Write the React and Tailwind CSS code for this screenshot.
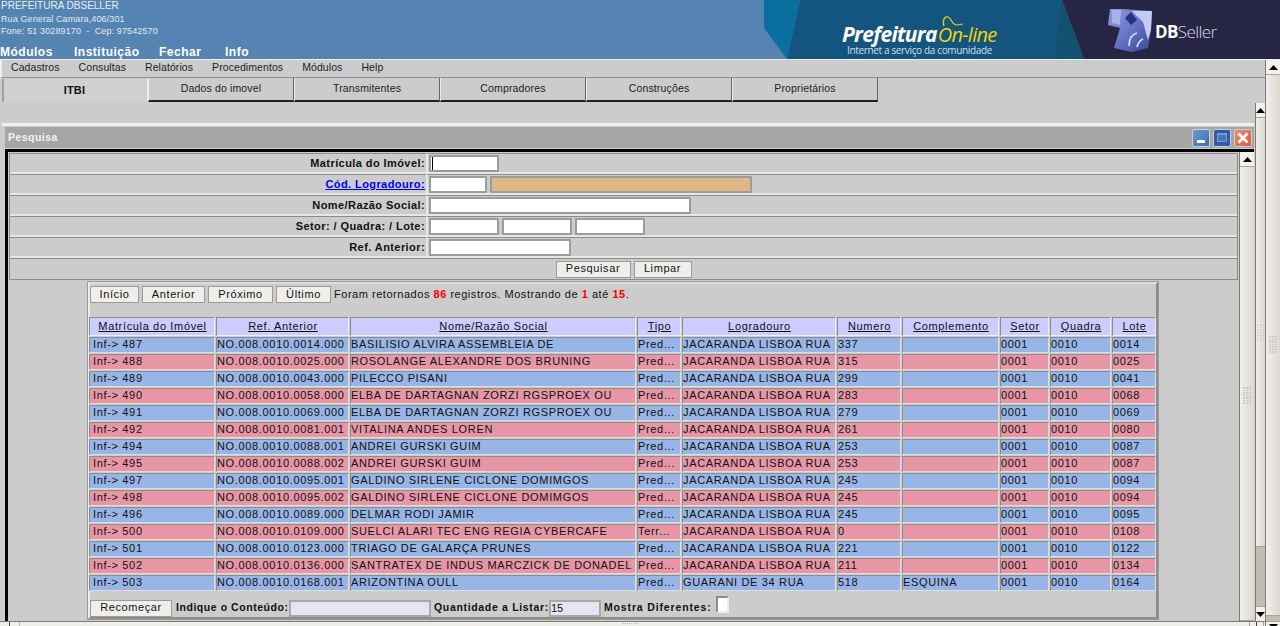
import React from "react";

const tabs = ["Dados do imovel", "Transmitentes", "Compradores", "Construções", "Proprietários"];
const menu = ["Cadastros", "Consultas", "Relatórios", "Procedimentos", "Módulos", "Help"];

const columns = [
  { name: "Matrícula do Imóvel", width: "w-[126px]" },
  { name: "Ref. Anterior", width: "w-[133px]" },
  { name: "Nome/Razão Social", width: "w-[286px]" },
  { name: "Tipo", width: "w-[44px]" },
  { name: "Logradouro", width: "w-[154px]" },
  { name: "Numero", width: "w-[64px]" },
  { name: "Complemento", width: "w-[97px]" },
  { name: "Setor", width: "w-[49px]" },
  { name: "Quadra", width: "w-[61px]" },
  { name: "Lote", width: "w-[44px]" },
];

const JAC = "JACARANDA LISBOA RUA";
const rows = [
  ["Inf-> 487", "NO.008.0010.0014.000", "BASILISIO ALVIRA ASSEMBLEIA DE", "Pred...", JAC, "337", "", "0001", "0010", "0014"],
  ["Inf-> 488", "NO.008.0010.0025.000", "ROSOLANGE ALEXANDRE DOS BRUNING", "Pred...", JAC, "315", "", "0001", "0010", "0025"],
  ["Inf-> 489", "NO.008.0010.0043.000", "PILECCO PISANI", "Pred...", JAC, "299", "", "0001", "0010", "0041"],
  ["Inf-> 490", "NO.008.0010.0058.000", "ELBA DE DARTAGNAN ZORZI RGSPROEX OU", "Pred...", JAC, "283", "", "0001", "0010", "0068"],
  ["Inf-> 491", "NO.008.0010.0069.000", "ELBA DE DARTAGNAN ZORZI RGSPROEX OU", "Pred...", JAC, "279", "", "0001", "0010", "0069"],
  ["Inf-> 492", "NO.008.0010.0081.001", "VITALINA ANDES LOREN", "Pred...", JAC, "261", "", "0001", "0010", "0080"],
  ["Inf-> 494", "NO.008.0010.0088.001", "ANDREI GURSKI GUIM", "Pred...", JAC, "253", "", "0001", "0010", "0087"],
  ["Inf-> 495", "NO.008.0010.0088.002", "ANDREI GURSKI GUIM", "Pred...", JAC, "253", "", "0001", "0010", "0087"],
  ["Inf-> 497", "NO.008.0010.0095.001", "GALDINO SIRLENE CICLONE DOMIMGOS", "Pred...", JAC, "245", "", "0001", "0010", "0094"],
  ["Inf-> 498", "NO.008.0010.0095.002", "GALDINO SIRLENE CICLONE DOMIMGOS", "Pred...", JAC, "245", "", "0001", "0010", "0094"],
  ["Inf-> 496", "NO.008.0010.0089.000", "DELMAR RODI JAMIR", "Pred...", JAC, "245", "", "0001", "0010", "0095"],
  ["Inf-> 500", "NO.008.0010.0109.000", "SUELCI ALARI TEC ENG REGIA CYBERCAFE", "Terr...", JAC, "0", "", "0001", "0010", "0108"],
  ["Inf-> 501", "NO.008.0010.0123.000", "TRIAGO DE GALARÇA PRUNES", "Pred...", JAC, "221", "", "0001", "0010", "0122"],
  ["Inf-> 502", "NO.008.0010.0136.000", "SANTRATEX DE INDUS MARCZICK DE DONADEL", "Pred...", JAC, "211", "", "0001", "0010", "0134"],
  ["Inf-> 503", "NO.008.0010.0168.001", "ARIZONTINA OULL", "Pred...", "GUARANI DE 34 RUA", "518", "ESQUINA", "0001", "0010", "0164"],
];

const Arrow = ({ down }) => (
  <svg width="9" height="5" viewBox="0 0 9 5" className="shrink-0">
    <path d={down ? "M0 0h9L4.5 5z" : "M0 5h9L4.5 0z"} fill="#000" />
  </svg>
);

const Grip = ({ className }) => (
  <div className={`grid grid-cols-3 gap-[1px] w-[8px] ${className}`}>
    {Array.from({ length: 21 }).map((_, i) => (
      <span key={i} className="w-[1.5px] h-[1.5px] bg-[#cfcac3]" />
    ))}
  </div>
);

// vertical scrollbar: arrow button, thumb with grip, then whatever track is left
const ScrollBar = ({ width, gripClass, thumbClass = "flex-1", track, bottom, bottomClass = "h-[15px]" }) => (
  <div className={`${width} shrink-0 flex flex-col border-l border-[#807a70] bg-[#c4bcb1] overflow-hidden`}>
    <div className="h-[15px] shrink-0 flex items-center justify-center bg-[#f3f1ed] border-b border-[#a9a39a]">
      <Arrow />
    </div>
    <div className={`${thumbClass} shrink-0 flex flex-col items-center bg-gradient-to-r from-[#f1efeb] to-[#dcd8d1] border-b border-[#a9a39a]`}>
      <Grip className={gripClass} />
    </div>
    {track && <div className="flex-1" />}
    {bottom && (
      <div className={`${bottomClass} shrink-0 flex items-center justify-center bg-[#f3f1ed] border-t border-[#a9a39a]`}>
        <Arrow down />
      </div>
    )}
  </div>
);

const Button = ({ children, className = "" }) => (
  <button className={`h-[17px] shrink-0 flex items-center justify-center pb-[1px] bg-[#f0eee9] border border-[#9a9a9a] text-[11px] tracking-[0.6px] text-[#111] ${className}`}>
    {children}
  </button>
);

const Field = ({ width, bg = "bg-white", caret }) => (
  <div className={`${width} h-[17px] shrink-0 ${bg} border-2 border-[#9c9c9c] rounded-[1px] flex items-center`}>
    {caret && <span className="ml-[1px] w-[1px] h-[13px] bg-black" />}
  </div>
);

const FormRow = ({ label, link, children }) => (
  <div className="h-[21px] flex border-b-2 border-b-[#e6e6e6]">
    <div className="w-[416px] flex items-center justify-end pr-[1px] border-t border-[#8c8c8c] font-bold text-[11px] tracking-[0.42px] text-[#111]">
      {link ? <a href="#" className="text-[#0000ee] underline">{label}</a> : label}
    </div>
    <div className="flex-1 flex items-center gap-[3px] pl-[1px] border-l-2 border-l-[#e6e6e6] border-t border-t-[#8c8c8c]">
      {children}
    </div>
  </div>
);

const WinButton = ({ className, children }) => (
  <div className={`w-[18px] h-[18px] rounded-[2px] border border-[#c8d0dc] flex items-center justify-center ${className}`}>
    {children}
  </div>
);

const Banner = () => (
  <div className="relative w-[516px] h-[59px] shrink-0">
    <svg width="516" height="59" viewBox="0 0 516 59" className="absolute inset-0">
      <polygon points="0,0 36,0 23,59 0,28" fill="#0a6e9e" />
      <polygon points="36,0 298,0 320,59 23,59" fill="#13557f" />
      <polygon points="298,0 516,0 516,59 320,59" fill="#262644" />
      <polygon points="298,0 320,59 290,59" fill="#14506f" />
      {/* wave over the word On-line */}
      <path d="M180 26c-2-6 1-10 4-9 4 2 4 8 9 8l6-1" fill="none" stroke="#f0d20a" strokeWidth="1.2" />
      {/* DBSeller cube */}
      <defs>
        <linearGradient id="cube" x1="0" y1="0" x2="1" y2="1">
          <stop offset="0" stopColor="#8f9be0" />
          <stop offset="0.45" stopColor="#6a79cc" />
          <stop offset="1" stopColor="#3a4596" />
        </linearGradient>
      </defs>
      <path d="M346 9l12 0 30 2-1 19-3 18-16 4-18-4 6-20-12-3z" fill="url(#cube)" />
      <path d="M368 11l20 0-1 19-3 10-5-18z" fill="#c4ccf2" />
      <path d="M348 10l9 0-1 15-8-2z" fill="#a9b3ea" />
      <path d="M361 18l6-6 6 8-6 5z" fill="#2b2f80" />
      <path d="M365 46c0-8 4-12 8-13M373 47c1-4 3-7 6-8" stroke="#dfe4fa" strokeWidth="1.6" fill="none" />
    </svg>
    <div className="absolute left-[78px] top-[24px] flex items-baseline leading-[20px]">
      <span className="font-['Open_Sans',sans-serif] font-bold italic text-[21px] tracking-[-0.7px] text-white">Prefeitura</span>
      <span className="font-['Open_Sans',sans-serif] italic text-[20px] tracking-[-0.7px] ml-[1px] text-[#f0d20a]">On-line</span>
    </div>
    <div className="absolute left-[83px] top-[45px] font-['Open_Sans',sans-serif] text-[10px] leading-[11px] tracking-[-0.35px] text-[#d5dfe6]">
      Internet a serviço da comunidade
    </div>
    <div className="absolute left-[391px] top-[21px] font-['Open_Sans',sans-serif] font-light text-[17px] leading-[22px] tracking-[-0.6px] text-[#d8d8e4]">
      <span className="font-bold text-white">DB</span>Seller
    </div>
  </div>
);

export default function App() {
  return (
    <div className="w-[1280px] h-[626px] overflow-hidden flex flex-col bg-[#cccccc] font-['Liberation_Sans',Arial,sans-serif]">
      {/* Top banner */}
      <header className="h-[59px] shrink-0 flex justify-between bg-[#5584b3]">
        <div className="text-white">
          <div className="pl-[1px]">
            <div className="text-[10px] leading-[11px] text-[#e8eef5]">PREFEITURA DBSELLER</div>
            <div className="mt-[1px] text-[9px] leading-[14px] tracking-[0.12px] text-[#e2e9f2]">Rua General Camara,406/301</div>
            <div className="text-[9px] leading-[11px] tracking-[0.12px] text-[#e2e9f2]">Fone: 51 30289170 &nbsp;-&nbsp; Cep: 97542570</div>
          </div>
          <nav className="mt-[8px] flex font-bold text-[12px] leading-[14px] tracking-[0.5px]">
            <span className="w-[74px]">Módulos</span>
            <span className="w-[85px]">Instituição</span>
            <span className="w-[66px]">Fechar</span>
            <span>Info</span>
          </nav>
        </div>
        <Banner />
      </header>

      <div className="flex-1 min-h-0 flex border-t border-t-[#eeeeee]">
        <div className="flex-1 min-w-0 flex flex-col">
          {/* Menu */}
          <div className="h-[18px] shrink-0 flex items-center pl-[9px] pb-[1px] gap-[19px] border-b border-b-[#8f8f8f] border-l-2 border-l-[#eeeeee] text-[10.5px] tracking-[0.08px] text-[#222]">
            {menu.map((m) => (
              <span key={m}>{m}</span>
            ))}
          </div>

          {/* Tabs */}
          <div className="h-[25px] shrink-0 flex pl-[2px] text-[10.5px] tracking-[0.15px] text-[#222]">
            <div className="w-[146px] h-[23px] mt-[1px] flex items-center justify-center pr-[2px] bg-[#d0d0d0] border-l-2 border-l-[#9e9e9e] border-r border-r-[#eeeeee] font-bold text-[11px] text-[#111]">
              ITBI
            </div>
            {tabs.map((t) => (
              <div key={t} className="w-[146px] h-[24px] flex justify-center pt-[3px] border-b-2 border-b-[#222] border-r border-r-[#666] border-l border-l-[#eeeeee]">
                {t}
              </div>
            ))}
          </div>

          <div className="flex-1 min-h-0 flex">
            <div className="flex-1 min-w-0 pl-[2px] pt-[20px] flex flex-col">
              {/* Window */}
              <div className="w-[1252px] flex-1 min-h-0 flex flex-col border-t-[3px] border-t-[#eeeeee]">
                <div className="h-[21px] mt-[1px] ml-[3px] shrink-0 flex items-center justify-between pl-[3px] pr-[2px] bg-[#a6a6a6]">
                  <span className="font-bold text-[10.5px] tracking-[0.45px] text-[#f2f2f2]">Pesquisa</span>
                  <div className="flex gap-[3px]">
                    <WinButton className="bg-gradient-to-br from-[#6f9ad0] to-[#3c6cb0] items-end pb-[3px]">
                      <span className="w-[8px] h-[3px] bg-white" />
                    </WinButton>
                    <WinButton className="bg-[#2f5aa5]">
                      <span className="w-[10px] h-[9px] border border-[#7c9ad0] border-t-2 bg-[#4a76ba]" />
                    </WinButton>
                    <WinButton className="bg-gradient-to-br from-[#e89070] to-[#d8583c]">
                      <svg width="12" height="12" viewBox="0 0 12 12">
                        <path d="M1.5 1.5l9 9M10.5 1.5l-9 9" stroke="#fff" strokeWidth="2.6" />
                      </svg>
                    </WinButton>
                  </div>
                </div>
                <div className="flex-1 min-h-0 mt-[1px] ml-[3px] flex border-t-[3px] border-t-black border-l-[3px] border-l-black">
                  <div className="flex-1 min-w-0 pl-[1px] pt-[1px]">
                    {/* Search form */}
                    <div className="w-[1229px] border-l border-r border-[#8c8c8c] border-b border-b-[#8c8c8c]">
                      <FormRow label="Matrícula do Imóvel:">
                        <Field width="w-[70px]" caret />
                      </FormRow>
                      <FormRow label="Cód. Logradouro:" link>
                        <Field width="w-[58px]" />
                        <Field width="w-[262px]" bg="bg-[#deb887]" />
                      </FormRow>
                      <FormRow label="Nome/Razão Social:">
                        <Field width="w-[262px]" />
                      </FormRow>
                      <FormRow label="Setor: / Quadra: / Lote:">
                        <Field width="w-[70px]" />
                        <Field width="w-[70px]" />
                        <Field width="w-[70px]" />
                      </FormRow>
                      <FormRow label="Ref. Anterior:">
                        <Field width="w-[142px]" />
                      </FormRow>
                      <div className="h-[21px] flex items-center justify-center gap-[3px] border-t border-[#8c8c8c]">
                        <Button className="w-[75px]">Pesquisar</Button>
                        <Button className="w-[58px]">Limpar</Button>
                      </div>
                    </div>

                    {/* Results */}
                    <div className="w-[1070px] ml-[79px] mt-[2px] h-[337px] border-2 border-t-[#dddddd] border-l-[#eeeeee] border-r-[#8c8c8c] border-b-[#8c8c8c] outline-1 outline-[#9a9a9a] pt-[2px]">
                      <div className="flex items-center h-[17px]">
                        <Button className="w-[49px]">Início</Button>
                        <Button className="w-[63px] ml-[3px]">Anterior</Button>
                        <Button className="w-[65px] ml-[3px]">Próximo</Button>
                        <Button className="w-[55px] ml-[3px]">Último</Button>
                        <span className="ml-[3px] pb-[1px] text-[11px] tracking-[0.53px] text-[#111] whitespace-nowrap">
                          Foram retornados <b className="text-[#ff0000]">86</b> registros. Mostrando de <b className="text-[#ff0000]">1</b> até <b className="text-[#ff0000]">15</b>.
                        </span>
                      </div>
                      <table className="mt-[13px] ml-[-2px] w-[1069px] table-fixed border-separate border-spacing-[1px] text-[11px] tracking-[0.66px] text-[#111]">
                        <thead>
                          <tr>
                            {columns.map((c) => (
                              <th
                                key={c.name}
                                className={`${c.width} h-[18px] p-0 pl-[1px] font-normal tracking-[0.65px] text-center underline bg-[#ccccff] border border-t-[#8c8c8c] border-l-[#8c8c8c] border-r-[#eeeeee] border-b-[#eeeeee]`}
                              >
                                {c.name}
                              </th>
                            ))}
                          </tr>
                        </thead>
                        <tbody>
                          {rows.map((row, i) => (
                            <tr key={row[0]} className={i % 2 === 0 ? "bg-[#97b5e6]" : "bg-[#e896a6]"}>
                              {row.map((cell, j) => (
                                <td
                                  key={j}
                                  className={`h-[16px] p-0 pb-[1px] leading-[12px] whitespace-nowrap overflow-hidden border border-t-[#8c8c8c] border-l-[#8c8c8c] border-r-[#dddddd] border-b-[#dddddd] ${j === 0 ? "pl-[3px]" : ""}`}
                                >
                                  {cell}
                                </td>
                              ))}
                            </tr>
                          ))}
                        </tbody>
                      </table>
                      <div className="mt-[8px] flex items-center h-[17px] text-[10.5px] font-bold text-[#111] whitespace-nowrap">
                        <Button className="w-[82px] font-normal">Recomeçar</Button>
                        <span className="ml-[4px] w-[113px] tracking-[0.55px]">Indique o Conteúdo:</span>
                        <span className="w-[142px] h-[17px] shrink-0 bg-[#e4e4f4] border-2 border-[#a8a8a8]" />
                        <span className="ml-[3px] w-[115px] tracking-[0.67px]">Quantidade a Listar:</span>
                        <span className="w-[52px] h-[17px] shrink-0 bg-[#e4e4f4] border-2 border-[#a8a8a8] font-normal text-[11px] leading-[13px]">15</span>
                        <span className="ml-[3px] w-[108px] tracking-[0.85px]">Mostra Diferentes:</span>
                        <span className="ml-[4px] mb-[8px] w-[13px] h-[17px] shrink-0 bg-white border-2 border-t-[#8c8c8c] border-l-[#8c8c8c] border-r-[#eeeeee] border-b-[#eeeeee]" />
                      </div>
                    </div>
                  </div>
                  <ScrollBar width="w-[15px]" gripClass="mt-[220px]" />
                </div>
              </div>
            </div>
            <ScrollBar width="w-[10px]" gripClass="mt-[206px]" thumbClass="h-[429px]" track bottom />
          </div>

          {/* Horizontal scrollbar */}
          <div className="h-[5px] shrink-0 flex items-start border-t border-[#807a70] bg-[#f1efeb]">
            <div className="w-[20px] h-full border-r border-[#bcb7af] flex justify-center">
              <span className="w-[1px] h-[4px] bg-[#444]" />
            </div>
            <div className="ml-[603px] mt-[1px] w-[15px] h-[2px] border-t border-dotted border-[#bbb6ae]" />
            <div className="ml-auto mr-[1px] w-[15px] h-full border-l border-r border-[#a9a39a] flex justify-center">
              <span className="w-[1px] h-[4px] bg-[#444]" />
            </div>
          </div>
        </div>
        <ScrollBar width="w-[15px]" gripClass="mt-[261px]" thumbClass="h-[541px]" track bottom bottomClass="h-[5px] items-start pt-[2px]" />
      </div>
    </div>
  );
}
